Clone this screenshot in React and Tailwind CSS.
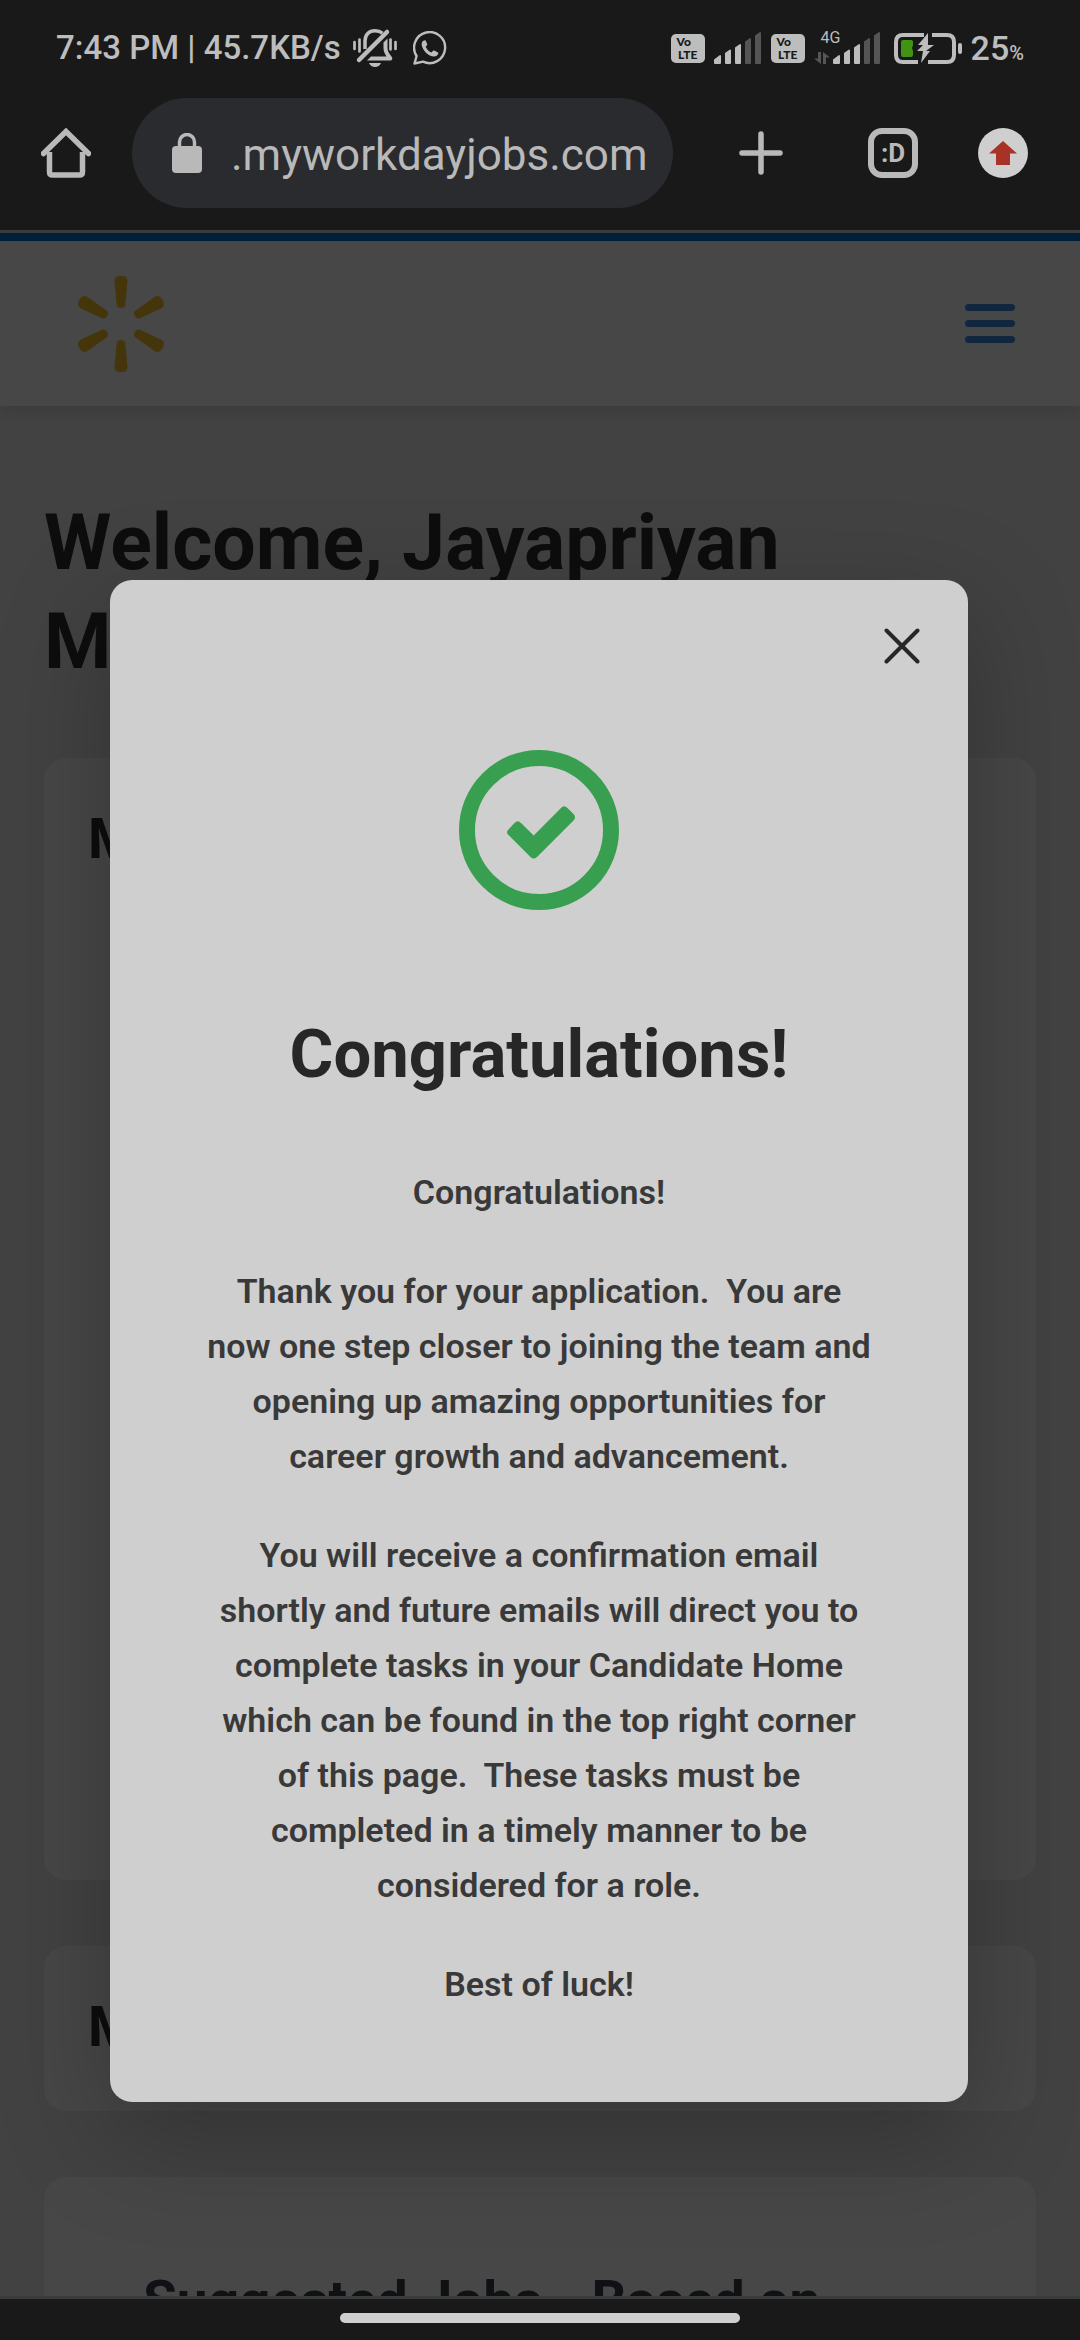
const font = "font-['Roboto',sans-serif]";

function MutedBell() {
  return (
    <svg className="h-10 w-11" viewBox="0 0 44 40" fill="none" stroke="#bdbdbd" aria-hidden="true">
      <path d="M6 32 34 4" strokeWidth="4.500" strokeLinecap="round" />
      <path d="M12 21V13C12 6.500 16 2.800 22 2.800c3 0 5.400.8 7.400 2.400" strokeWidth="3.500" />
      <path d="M33 13v8c0 3 1.500 5.500 4.500 9.500H17L33 15" fill="none" strokeWidth="0" />
      <path d="M30.500 14.500 34.500 10.500V20c0 3 1.500 5.500 4 8.500 1.500 2 .8 4-1.500 4H14l4-4h15.500c-2-3-3-5.500-3-8.500z" fill="#bdbdbd" stroke="none" />
      <path d="M16 35h12c-1 2.500-3.500 4-6 4s-5-1.500-6-4z" fill="#bdbdbd" stroke="none" />
      <path d="M1.500 14v7M6.500 11.500v12M37.500 11.500v10M42.500 14v7" strokeWidth="2.700" strokeLinecap="round" />
    </svg>
  );
}

function WhatsApp() {
  return (
    <svg className="size-[34px]" viewBox="0 0 34 34" fill="none" aria-hidden="true">
      <path d="M1.500 32.500 3.600 25A15.500 15.500 0 1 1 10 30.600z" stroke="#bdbdbd" strokeWidth="2.400" strokeLinejoin="round" />
      <path d="M11 9.500c-1.500.6-2.500 2-2.300 4.200C9.200 19 15.500 25.500 21 25.500c2.300 0 4.300-1.500 4.400-3.700l-4.600-2.600-2.500 2.300c-2.700-1.200-4.500-3.200-5.600-5.800l1.700-2.200-1.900-4.200z" fill="#bdbdbd" />
    </svg>
  );
}

function VoLte() {
  return (
    <span className="flex h-[29px] w-[34px] flex-col items-center justify-center rounded-[5px] bg-[#bdbdbd] font-['Lato',sans-serif] text-xs leading-[13px] font-black text-[#191919]">
      <span className="self-start pl-[6px]">Vo</span>
      <span>LTE</span>
    </span>
  );
}

function Signal() {
  return (
    <svg className="h-8 w-12" viewBox="0 0 48 32" aria-hidden="true">
      <path d="M0 31v-3.500L6 23q1 0 1 1v7q0 1-1 1H1q-1 0-1-1zM11 31V21l5-3.500q1 0 1 1V31q0 1-1 1h-4q-1 0-1-1zM21 31V15.500L26 12q1 0 1 1v18q0 1-1 1h-4q-1 0-1-1z" fill="#bdbdbd" />
      <path d="M31 31V9.500L36 6q1 0 1 1v24q0 1-1 1h-4q-1 0-1-1zM41 31V3.500L46 0q1 0 1 1v30q0 1-1 1h-4q-1 0-1-1z" fill="#555" />
    </svg>
  );
}

function Battery() {
  return (
    <svg className="h-[31px] w-[68px]" viewBox="0 0 68 31" fill="none" aria-hidden="true">
      <path d="M30 2H9Q2 2 2 9v13q0 7 7 7h15M38 2h15q7 0 7 7v13q0 7-7 7H34" stroke="#bdbdbd" strokeWidth="4" />
      <rect x="64" y="10" width="4" height="11" rx="2" fill="#bdbdbd" />
      <path d="M9 7h8q2 0 2 2v3l-1 3 1 3v4q0 2-2 2H9q-2 0-2-2V9q0-2 2-2z" fill="#3f9413" />
      <path d="M34 0 24 12h5L23 18h6l-2 12 9-12h-4l8-6h-6l0-12z" fill="#bdbdbd" />
    </svg>
  );
}

function StatusBar() {
  return (
    <div className="flex h-[96px] items-center justify-between pr-14 pl-14 text-[34px] leading-10 font-medium text-[#bdbdbd]">
      <div className="flex items-center">
        <span className="text-[33px]">7:43 PM | 45.7KB/s</span>
        <span className="ml-3 flex items-center gap-4">
          <MutedBell />
          <WhatsApp />
        </span>
      </div>
      <div className="flex items-center gap-[9px]">
        <VoLte />
        <Signal />
        <VoLte />
        <span className="relative flex pl-[19px]">
          <span className="absolute -top-[2px] left-[7px] text-base leading-4 font-normal">4G</span>
          <svg className="absolute bottom-0 left-0 h-3 w-4" viewBox="0 0 16 12" fill="#555" aria-hidden="true">
            <path d="M4 0h3v12L0 6.500h4zM9 0l7 5.500h-4V12H9z" />
          </svg>
          <Signal />
        </span>
        <span className="ml-1"><Battery /></span>
        <span className="flex items-baseline">
          25<span className="text-xl">%</span>
        </span>
      </div>
    </div>
  );
}

function BrowserBar() {
  return (
    <div className="flex h-[134px] items-center pr-[52px] pb-[20px] pl-[41px]">
      <button type="button" aria-label="Home" className="shrink-0">
        <svg className="size-[50px]" viewBox="0 0 50 50" fill="none" stroke="#b9b9b9" strokeWidth="5.500" aria-hidden="true">
          <path d="M8.500 24v20q0 3 3 3h27q3 0 3-3V24" />
          <path d="M2.500 25.500 25 3.500l22.500 22" strokeLinecap="round" />
        </svg>
      </button>
      <label className="ml-[41px] flex h-[110px] min-w-0 flex-1 items-center rounded-full bg-[#2a2b2f] pr-5 pl-10">
        <svg className="h-10 w-[30px] shrink-0" viewBox="0 0 30 40" fill="none" aria-hidden="true">
          <rect y="13" width="30" height="27" rx="4" fill="#b9b9b9" />
          <path d="M7.500 14V9a7.500 7.500 0 0 1 15 0v5" stroke="#b9b9b9" strokeWidth="3.500" />
        </svg>
        <input
          aria-label="Address"
          defaultValue=".myworkdayjobs.com"
          className="ml-[29px] w-full min-w-0 bg-transparent pt-1 text-[44px] leading-[56px] text-[#b9b9b9] outline-none"
        />
      </label>
      <button type="button" aria-label="New tab" className="ml-[66px] shrink-0">
        <svg className="size-11" viewBox="0 0 44 44" stroke="#b9b9b9" strokeWidth="5.500" strokeLinecap="round" aria-hidden="true">
          <path d="M22 3v38M3 22h38" />
        </svg>
      </button>
      <button type="button" aria-label="Open tabs" className="ml-[85px] flex size-[50px] shrink-0 items-center justify-center rounded-[14px] border-[6px] border-[#b9b9b9] text-[26px] leading-8 font-bold text-[#b9b9b9]">
        :D
      </button>
      <button type="button" aria-label="Update browser" className="ml-[60px] flex size-[50px] shrink-0 items-center justify-center rounded-full bg-[#cfcfcf]">
        <svg className="h-6 w-7" viewBox="0 0 28 24" fill="#a93226" aria-hidden="true">
          <path d="M14 0 28 12.500H21V24H7V12.500H0z" />
        </svg>
      </button>
    </div>
  );
}

function Spark() {
  return (
    <svg className="h-24 w-[86px]" viewBox="-43 -48 86 96" fill="#45350a" aria-hidden="true">
      {[0, 60, 120, 180, 240, 300].map((a) => (
        <path key={a} transform={`rotate(${a})`} d="M-6.500-43Q-6.500-48 0-48T6.500-43L4.300-19Q4-16 0-16T-4.300-19z" />
      ))}
    </svg>
  );
}

function SiteHeader() {
  return (
    <header className="flex h-[173px] items-center justify-between border-t-8 border-[#001f38] bg-[#474747] pr-[65px] pl-[78px] shadow-[0_4px_14px_rgba(0,0,0,0.12)]">
      <a href="#home" aria-label="Careers home"><Spark /></a>
      <button type="button" aria-label="Menu" className="flex w-[50px] flex-col gap-[9px]">
        <span className="h-[7px] rounded-sm bg-[#10273f]" />
        <span className="h-[7px] rounded-sm bg-[#10273f]" />
        <span className="h-[7px] rounded-sm bg-[#10273f]" />
      </button>
    </header>
  );
}

function PageContent() {
  return (
    <div className="px-11 pt-[88px] text-[#0d0d0d]">
      <h1 className="text-[77px] leading-[99px] font-bold">
        Welcome, Jayapriyan
        <br />M
      </h1>
      <section className="mt-[66px] h-[1122px] rounded-[22px] bg-[#474747] px-11 pt-[45px]">
        <h2 className="text-[55px] leading-[72px] font-bold">M</h2>
      </section>
      <section className="mt-[66px] rounded-[22px] bg-[#474747] px-11 pt-[45px] pb-12">
        <h2 className="text-[55px] leading-[72px] font-bold">M</h2>
      </section>
      <section className="mt-[66px] rounded-[22px] bg-[#474747] px-[99px] pt-[88px] pb-11">
        <h2 className="text-[55px] leading-[72px] font-bold text-[#0f1115]">Suggested Jobs - Based on</h2>
      </section>
    </div>
  );
}

function Dialog() {
  return (
    <div className="absolute inset-0 flex items-start pt-[347px] pr-[112px] pl-[110px]">
      <div
        role="dialog"
        aria-modal="true"
        aria-labelledby="dialog-title"
        className="relative flex w-full flex-col items-center rounded-[22px] bg-[#cfcfcf] px-[82px] pt-[170px] pb-[90px] text-center shadow-[0_33px_110px_rgba(0,0,0,0.25)]"
      >
        <button type="button" aria-label="Close" className="absolute top-[44px] right-[44px] p-1">
          <svg className="size-9" viewBox="0 0 36 36" stroke="#272727" strokeWidth="4" strokeLinecap="round" aria-hidden="true">
            <path d="m2.500 2.500 31 31M33.500 2.500l-31 31" />
          </svg>
        </button>
        <svg className="size-40" viewBox="0 0 160 160" fill="none" aria-hidden="true">
          <circle cx="80" cy="80" r="72" stroke="#389f50" strokeWidth="16" />
          <path d="M49.500 79.500 55.500 73Q58.500 69.500 62 73L74.700 85.500 102 58Q105 54.500 108.500 58L114.500 64Q117.500 67 114.500 70.500L78 107Q74.700 110 71.500 107L49.500 85Q46.500 82 49.500 79.500z" fill="#389f50" />
        </svg>
        <h2 id="dialog-title" className="mt-[100px] text-[67px] leading-[88px] font-bold text-[#272727]">
          Congratulations!
        </h2>
        <div className="mt-[67px] flex flex-col gap-11 text-[34px] leading-[55px] font-semibold text-[#393939]">
          <p>Congratulations!</p>
          <p>
            Thank you for your application.&nbsp; You are
            <br />now one step closer to joining the team and
            <br />opening up amazing opportunities for
            <br />career growth and advancement.
          </p>
          <p>
            You will receive a confirmation email
            <br />shortly and future emails will direct you to
            <br />complete tasks in your Candidate Home
            <br />which can be found in the top right corner
            <br />of this page.&nbsp; These tasks must be
            <br />completed in a timely manner to be
            <br />considered for a role.
          </p>
          <p>Best of luck!</p>
        </div>
      </div>
    </div>
  );
}

export default function App() {
  return (
    <div className={`${font} flex h-screen flex-col overflow-hidden bg-[#191919]`}>
      <StatusBar />
      <BrowserBar />
      <main className="relative min-h-0 flex-1 overflow-hidden border-y-[3px] border-[#3a3c3c] bg-[#424242]">
        <SiteHeader />
        <PageContent />
        <Dialog />
      </main>
      <div className="flex h-[41px] shrink-0 justify-center pt-[14px]">
        <span className="h-[10px] w-[37%] rounded-full bg-[#cfcfcf]" />
      </div>
    </div>
  );
}
